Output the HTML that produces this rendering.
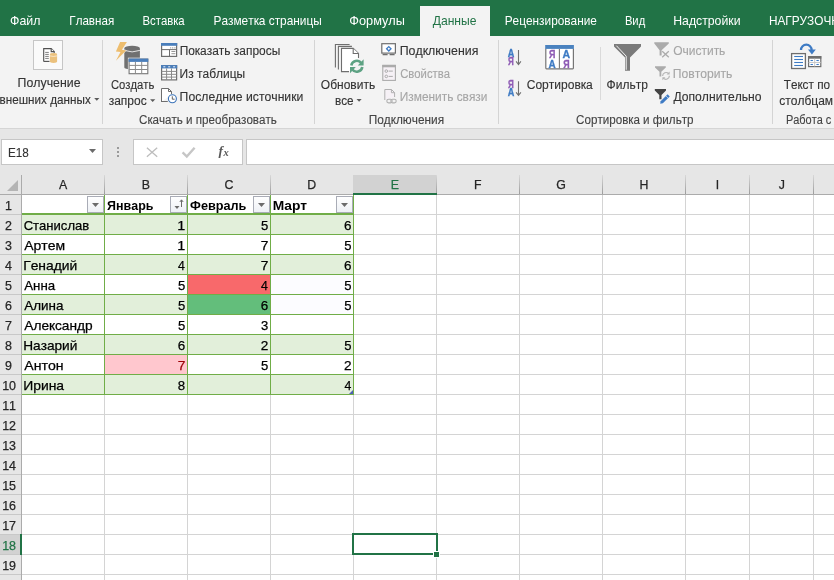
<!DOCTYPE html>
<html><head><meta charset="utf-8"><style>
html,body{margin:0;padding:0;overflow:hidden;background:#fff}
svg{display:block;will-change:transform}
text{font-family:"Liberation Sans",sans-serif;font-kerning:none;white-space:pre}
</style></head><body>
<svg width="834" height="580" viewBox="0 0 834 580">
<rect x="0" y="0" width="834" height="36" fill="#217346"/>
<rect x="420" y="6" width="70" height="30" fill="#F3F3F3"/>
<text x="10.09" y="25.00" font-size="13" fill="#FFFFFF" textLength="30.37" lengthAdjust="spacingAndGlyphs">Файл</text>
<text x="69.35" y="25.00" font-size="13" fill="#FFFFFF" textLength="44.86" lengthAdjust="spacingAndGlyphs">Главная</text>
<text x="142.47" y="25.00" font-size="13" fill="#FFFFFF" textLength="42.13" lengthAdjust="spacingAndGlyphs">Вставка</text>
<text x="213.53" y="25.00" font-size="13" fill="#FFFFFF" textLength="108.30" lengthAdjust="spacingAndGlyphs">Разметка страницы</text>
<text x="349.27" y="25.00" font-size="13" fill="#FFFFFF" textLength="55.62" lengthAdjust="spacingAndGlyphs">Формулы</text>
<text x="504.73" y="25.00" font-size="13" fill="#FFFFFF" textLength="92.20" lengthAdjust="spacingAndGlyphs">Рецензирование</text>
<text x="624.88" y="25.00" font-size="13" fill="#FFFFFF" textLength="20.31" lengthAdjust="spacingAndGlyphs">Вид</text>
<text x="673.19" y="25.00" font-size="13" fill="#FFFFFF" textLength="67.36" lengthAdjust="spacingAndGlyphs">Надстройки</text>
<text x="432.71" y="25.00" font-size="13" fill="#217346" textLength="43.83" lengthAdjust="spacingAndGlyphs">Данные</text>
<text x="768.93" y="25.00" font-size="13" fill="#FFFFFF" textLength="188.16" lengthAdjust="spacingAndGlyphs">НАГРУЗОЧНОЕ ТЕСТИРОВАНИЕ</text>
<rect x="0" y="36" width="834" height="92" fill="#F3F3F3"/>
<rect x="0" y="128" width="834" height="1" fill="#D5D5D5"/>
<rect x="102" y="40" width="1" height="84" fill="#D4D4D4"/>
<rect x="314" y="40" width="1" height="84" fill="#D4D4D4"/>
<rect x="498" y="40" width="1" height="84" fill="#D4D4D4"/>
<rect x="772" y="40" width="1" height="84" fill="#D4D4D4"/>
<rect x="600" y="47" width="1" height="53" fill="#DADADA"/>
<text x="17.60" y="87.00" font-size="12.5" fill="#333333" textLength="62.95" lengthAdjust="spacingAndGlyphs" stroke="#333333" stroke-width="0.12">Получение</text>
<text x="-0.51" y="104.20" font-size="12.5" fill="#333333" textLength="91.24" lengthAdjust="spacingAndGlyphs" stroke="#333333" stroke-width="0.12">внешних данных</text>
<text x="110.93" y="89.10" font-size="12.5" fill="#333333" textLength="43.43" lengthAdjust="spacingAndGlyphs" stroke="#333333" stroke-width="0.12">Создать</text>
<text x="108.71" y="104.80" font-size="12.5" fill="#333333" textLength="38.00" lengthAdjust="spacingAndGlyphs" stroke="#333333" stroke-width="0.12">запрос</text>
<text x="179.63" y="55.10" font-size="12.5" fill="#333333" textLength="100.60" lengthAdjust="spacingAndGlyphs" stroke="#333333" stroke-width="0.12">Показать запросы</text>
<text x="179.62" y="78.00" font-size="12.5" fill="#333333" textLength="65.61" lengthAdjust="spacingAndGlyphs" stroke="#333333" stroke-width="0.12">Из таблицы</text>
<text x="179.61" y="101.00" font-size="12.5" fill="#333333" textLength="123.73" lengthAdjust="spacingAndGlyphs" stroke="#333333" stroke-width="0.12">Последние источники</text>
<text x="139.01" y="124.20" font-size="12.5" fill="#444444" textLength="137.87" lengthAdjust="spacingAndGlyphs" stroke="#444444" stroke-width="0.12">Скачать и преобразовать</text>
<text x="320.83" y="89.10" font-size="12.5" fill="#333333" textLength="54.36" lengthAdjust="spacingAndGlyphs" stroke="#333333" stroke-width="0.12">Обновить</text>
<text x="334.99" y="104.80" font-size="12.5" fill="#333333" textLength="18.64" lengthAdjust="spacingAndGlyphs" stroke="#333333" stroke-width="0.12">все</text>
<text x="399.70" y="55.10" font-size="12.5" fill="#333333" textLength="78.66" lengthAdjust="spacingAndGlyphs" stroke="#333333" stroke-width="0.12">Подключения</text>
<text x="400.13" y="78.00" font-size="12.5" fill="#A6A6A6" textLength="49.87" lengthAdjust="spacingAndGlyphs" stroke="#A6A6A6" stroke-width="0.12">Свойства</text>
<text x="399.72" y="101.00" font-size="12.5" fill="#A6A6A6" textLength="87.70" lengthAdjust="spacingAndGlyphs" stroke="#A6A6A6" stroke-width="0.12">Изменить связи</text>
<text x="368.74" y="124.20" font-size="12.5" fill="#444444" textLength="75.38" lengthAdjust="spacingAndGlyphs" stroke="#444444" stroke-width="0.12">Подключения</text>
<text x="526.69" y="89.20" font-size="12.5" fill="#333333" textLength="66.11" lengthAdjust="spacingAndGlyphs" stroke="#333333" stroke-width="0.12">Сортировка</text>
<text x="606.61" y="89.20" font-size="12.5" fill="#333333" textLength="41.30" lengthAdjust="spacingAndGlyphs" stroke="#333333" stroke-width="0.12">Фильтр</text>
<text x="673.13" y="55.10" font-size="12.5" fill="#A6A6A6" textLength="52.26" lengthAdjust="spacingAndGlyphs" stroke="#A6A6A6" stroke-width="0.12">Очистить</text>
<text x="672.72" y="78.00" font-size="12.5" fill="#A6A6A6" textLength="59.68" lengthAdjust="spacingAndGlyphs" stroke="#A6A6A6" stroke-width="0.12">Повторить</text>
<text x="673.61" y="101.00" font-size="12.5" fill="#333333" textLength="87.90" lengthAdjust="spacingAndGlyphs" stroke="#333333" stroke-width="0.12">Дополнительно</text>
<text x="576.11" y="124.20" font-size="12.5" fill="#444444" textLength="117.38" lengthAdjust="spacingAndGlyphs" stroke="#444444" stroke-width="0.12">Сортировка и фильтр</text>
<text x="783.74" y="88.90" font-size="12.5" fill="#333333" textLength="46.36" lengthAdjust="spacingAndGlyphs" stroke="#333333" stroke-width="0.12">Текст по</text>
<text x="779.29" y="104.80" font-size="12.5" fill="#333333" textLength="53.84" lengthAdjust="spacingAndGlyphs" stroke="#333333" stroke-width="0.12">столбцам</text>
<text x="785.90" y="123.60" font-size="12.5" fill="#444444" textLength="94.53" lengthAdjust="spacingAndGlyphs" stroke="#444444" stroke-width="0.12">Работа с данными</text>
<rect x="33.5" y="40.5" width="29" height="29" fill="#FAFAFA" stroke="#C6C6C6" stroke-width="1"/>
<path d="M43.7 61.5V48.6H51.2L54.2 51.6V53" fill="#fff" stroke="#505050" stroke-width="1.1"/>
<path d="M43.7 61.4H49.5" stroke="#505050" stroke-width="1.1"/>
<path d="M51.2 48.6V51.6H54.2" fill="#fff" stroke="#505050" stroke-width="1.1"/>
<rect x="45.2" y="51.9" width="3.6" height="1" fill="#808080"/>
<rect x="45.2" y="53.9" width="3.6" height="1" fill="#808080"/>
<rect x="45.2" y="55.9" width="3.6" height="1" fill="#808080"/>
<rect x="45.2" y="57.9" width="3.6" height="1" fill="#808080"/>
<path d="M49.9 54.2V61.6Q49.9 63 53.5 63Q57.1 63 57.1 61.6V54.2Z" fill="#EBC17D"/>
<ellipse cx="53.5" cy="54.2" rx="3.6" ry="1.3" fill="#EBC17D"/>
<path d="M50 55.9Q53.5 57.0 57 55.9" stroke="#FFF7E8" stroke-width="0.7" fill="none"/>
<path d="M124.3 48.4V67.4Q124.3 69.2 132.1 69.2Q139.9 69.2 139.9 67.4V48.4Z" fill="#707070"/>
<ellipse cx="132.1" cy="48.3" rx="7.8" ry="2.6" fill="#707070"/>
<path d="M124.3 50.4Q132.1 53.4 139.9 50.4" stroke="#F3F3F3" stroke-width="0.9" fill="none"/>
<path d="M120.1 42.1L126.9 42.1L121.9 49.7L126.1 50.4L115.9 60.7L120.5 52.0L115.9 51.4Z" fill="#EDBD6E" stroke="#F3F3F3" stroke-width="1" paint-order="stroke"/>
<rect x="127.9" y="57.7" width="21.1" height="17.2" fill="#F3F3F3"/>
<rect x="129.1" y="59.1" width="18.7" height="14.6" fill="#FFFFFF" stroke="#767676" stroke-width="1.1"/>
<rect x="128.6" y="58.6" width="19.7" height="3.3" fill="#4A7EBB"/>
<path d="M135.4 61.8V73.3M141.7 61.8V73.3M129.1 65.4H147.8M129.1 69.5H147.8" stroke="#8A8A8A" stroke-width="1"/>
<rect x="161.6" y="43.6" width="15" height="12.8" fill="#fff" stroke="#6E6E6E" stroke-width="1.2"/>
<rect x="161" y="43" width="16.2" height="2.8" fill="#4A7EBB"/>
<rect x="170.1" y="47.4" width="1" height="1" fill="#8A8A8A"/>
<rect x="171.9" y="47.4" width="1" height="1" fill="#8A8A8A"/>
<rect x="173.7" y="47.4" width="1" height="1" fill="#8A8A8A"/>
<rect x="175.5" y="47.4" width="1" height="1" fill="#8A8A8A"/>
<path d="M161.6 49.6H176.6M169.5 49.6V56.4" stroke="#6E6E6E" stroke-width="1"/>
<path d="M171.4 51.5H175.4M171.4 53.7H175.4" stroke="#8A8A8A" stroke-width="0.9"/>
<rect x="161.6" y="65.7" width="15" height="14.2" fill="#fff" stroke="#6E6E6E" stroke-width="1.2"/>
<rect x="161" y="65.1" width="16.2" height="3.3" fill="#4A7EBB"/>
<path d="M163.3 66.8H165.3M168.2 66.8H170.2M173.1 66.8H175.1" stroke="#fff" stroke-width="0.9"/>
<path d="M166.6 68.4V79.9M171.5 68.4V79.9M161.6 71.4H176.6M161.6 74.3H176.6M161.6 77.1H176.6" stroke="#8A8A8A" stroke-width="1"/>
<path d="M161.5 102V88.5H168.5L171.5 91.5V94" fill="#fff" stroke="#6E6E6E" stroke-width="1" stroke-linejoin="miter"/>
<path d="M161.5 101.5H167.8" stroke="#6E6E6E" stroke-width="1"/>
<path d="M168.5 88.5V91.5H171.5" fill="none" stroke="#6E6E6E" stroke-width="1"/>
<circle cx="172.4" cy="98.8" r="4.0" fill="#fff" stroke="#3A72B8" stroke-width="1.1"/>
<path d="M172.3 96.3V99.2H174.6" fill="none" stroke="#505050" stroke-width="0.9"/>
<path d="M94.2 97.9h5.2l-2.6 2.8z" fill="#5A5A5A"/>
<path d="M150.1 99.2h5.2l-2.6 2.8z" fill="#5A5A5A"/>
<path d="M356.5 99.0h5.2l-2.6 2.8z" fill="#5A5A5A"/>
<path d="M335.4 67.5V44.5H349.6" fill="none" stroke="#6E6E6E" stroke-width="1.1"/>
<path d="M338.4 69.5V46.4H351.9" fill="none" stroke="#6E6E6E" stroke-width="1.1"/>
<path d="M349 71.6H341.5V48.4H353.2L358.5 53.6V58" fill="#fff" stroke="#6E6E6E" stroke-width="1.1"/>
<path d="M353.2 48.4V53.5H358.5" fill="#fff" stroke="#6E6E6E" stroke-width="1.1"/>
<path d="M351.3 65.5A5.6 5.6 0 0 1 361.3 63.0" fill="none" stroke="#5DA283" stroke-width="2.6"/>
<path d="M363.6 59.2V65.4H357.8Z" fill="#5DA283"/>
<path d="M362.3 67.0A5.6 5.6 0 0 1 352.3 69.5" fill="none" stroke="#5DA283" stroke-width="2.6"/>
<path d="M350.0 73.2V67.0H355.8Z" fill="#5DA283"/>
<rect x="381.8" y="43.7" width="13.6" height="9.4" fill="#fff" stroke="#6E6E6E" stroke-width="1.2"/>
<path d="M382.6 54.6H387.6M389.6 54.6H394.6" stroke="#6E6E6E" stroke-width="1.4"/>
<path d="M388.8 46.6L391 48.8L388.8 51L386.6 48.8Z" fill="none" stroke="#3E7BC4" stroke-width="1.3"/>
<rect x="382.8" y="65.4" width="12.6" height="15" fill="#F6F1F6" stroke="#ABABAB" stroke-width="1.1"/>
<rect x="382.3" y="64.9" width="13.6" height="2.4" fill="#ABABAB"/>
<circle cx="386.3" cy="71.1" r="1.3" fill="none" stroke="#ABABAB" stroke-width="1"/>
<circle cx="386.3" cy="76.4" r="1.3" fill="none" stroke="#ABABAB" stroke-width="1"/>
<path d="M388.6 71.1H392.8M388.6 76.4H392.8" stroke="#ABABAB" stroke-width="1"/>
<path d="M384.8 100V89.5H391.5L394.6 92.6V97" fill="#F6F1F6" stroke="#B0B0B0" stroke-width="1"/>
<path d="M391.4 89.5V92.7H394.6" fill="none" stroke="#B0B0B0" stroke-width="1"/>
<rect x="386.8" y="99.3" width="5.4" height="3.6" rx="1.8" fill="none" stroke="#B0B0B0" stroke-width="1.1"/>
<rect x="390.8" y="99.3" width="5.4" height="3.6" rx="1.8" fill="none" stroke="#B0B0B0" stroke-width="1.1"/>
<text x="507.70" y="57.1" font-size="10" font-weight="bold" fill="#3E7BC4" stroke="#3E7BC4" stroke-width="0.3" textLength="6.60" lengthAdjust="spacingAndGlyphs">A</text>
<text x="508.00" y="64.9" font-size="10" font-weight="bold" fill="#8E5BB5" stroke="#8E5BB5" stroke-width="0.3" textLength="5.80" lengthAdjust="spacingAndGlyphs">Я</text>
<text x="508.00" y="87.5" font-size="10" font-weight="bold" fill="#8E5BB5" stroke="#8E5BB5" stroke-width="0.3" textLength="5.80" lengthAdjust="spacingAndGlyphs">Я</text>
<text x="507.70" y="95.7" font-size="10" font-weight="bold" fill="#3E7BC4" stroke="#3E7BC4" stroke-width="0.3" textLength="6.60" lengthAdjust="spacingAndGlyphs">A</text>
<path d="M518.5 50V64.2M516.1 61.4L518.5 64.5L520.9 61.4" fill="none" stroke="#707070" stroke-width="1.1"/>
<path d="M518.5 81.2V95.10000000000001M516.1 92.30000000000001L518.5 95.4L520.9 92.30000000000001" fill="none" stroke="#707070" stroke-width="1.1"/>
<path d="M545.8 48.5V68.1Q545.8 68.8 546.5 68.8H572.7Q573.4 68.8 573.4 68.1V48.5" fill="#fff" stroke="#767676" stroke-width="1.2"/>
<rect x="545.2" y="45" width="28.7" height="3.9" fill="#4A82BF"/>
<path d="M559.4 48.9V68.5" stroke="#767676" stroke-width="1.1"/>
<text x="549.00" y="57.7" font-size="10.6" font-weight="bold" fill="#8E5BB5" stroke="#8E5BB5" stroke-width="0.3" textLength="6.40" lengthAdjust="spacingAndGlyphs">Я</text>
<text x="548.60" y="67.7" font-size="10.6" font-weight="bold" fill="#3E7BC4" stroke="#3E7BC4" stroke-width="0.3" textLength="7.20" lengthAdjust="spacingAndGlyphs">A</text>
<text x="562.60" y="57.7" font-size="10.6" font-weight="bold" fill="#3E7BC4" stroke="#3E7BC4" stroke-width="0.3" textLength="7.60" lengthAdjust="spacingAndGlyphs">A</text>
<text x="563.20" y="67.7" font-size="10.6" font-weight="bold" fill="#8E5BB5" stroke="#8E5BB5" stroke-width="0.3" textLength="6.40" lengthAdjust="spacingAndGlyphs">Я</text>
<path d="M614 44H641V46.5L630 57.5V70.8H625V57.5L614 46.5Z" fill="#7A7A7A"/>
<path d="M616.4 45.7L626.2 56.2V69.8" fill="none" stroke="#FFFFFF" stroke-width="0.9"/>
<path d="M654.3 42.2H668.8V43.6L661.6 50.2V55.5H659.6V50.2L654.3 43.6Z" fill="#ABABAB"/>
<path d="M662.2 51.2L668.8 57.3M668.8 51.2L662.2 57.3" stroke="#ABABAB" stroke-width="1.3"/>
<path d="M655 66.2H665.8V67.4L661.3 71.8V76.5H659.5V71.8L655 67.4Z" fill="#ABABAB"/>
<path d="M662.6 76A3.5 3.5 0 0 1 668.6 73.6M669.4 75.8A3.5 3.5 0 0 1 663.4 78.2" fill="none" stroke="#B4B4B4" stroke-width="1.2"/>
<path d="M669.6 71.6V74.6H666.6Z" fill="#B4B4B4"/><path d="M662.4 80.2V77.2H665.4Z" fill="#B4B4B4"/>
<path d="M654.8 89H666V90.6L661.5 95V99.3H659.3V95L654.8 90.6Z" fill="#444444"/>
<path d="M660.2 103.8L662.85 103.34L669.78 96.41L667.58 94.21L660.65 101.14Z" fill="#3E7BC4"/>
<path d="M665.9 95.9L668.1 98.1" stroke="#F3F3F3" stroke-width="0.6"/>
<rect x="791.6" y="53.6" width="13.8" height="14.9" fill="#fff" stroke="#6E6E6E" stroke-width="1.3"/>
<path d="M794.2 56.5H803" stroke="#3E7BC4" stroke-width="1.1"/>
<path d="M794.2 59.5H803" stroke="#3E7BC4" stroke-width="1.1"/>
<path d="M794.2 62.5H803" stroke="#3E7BC4" stroke-width="1.1"/>
<path d="M794.2 65.5H803" stroke="#3E7BC4" stroke-width="1.1"/>
<rect x="808.6" y="56.6" width="12.2" height="10.0" fill="#fff" stroke="#6E6E6E" stroke-width="1.2"/>
<rect x="808.1" y="56.1" width="13.2" height="2.6" fill="#6E6E6E"/>
<path d="M814.7 58.6V66.5M808.6 62.5H820.8" stroke="#C4C4C4" stroke-width="0.9"/>
<path d="M810.5 60.5H812.9" stroke="#3E7BC4" stroke-width="1.1"/>
<path d="M816.4 60.5H818.8" stroke="#3E7BC4" stroke-width="1.1"/>
<path d="M810.5 64.5H812.9" stroke="#3E7BC4" stroke-width="1.1"/>
<path d="M816.4 64.5H818.8" stroke="#3E7BC4" stroke-width="1.1"/>
<path d="M801.0 50.0A5.3 5.3 0 0 1 811.6 50.0" fill="none" stroke="#3E7BC4" stroke-width="2.3"/>
<path d="M808.0 49.4H815.8L811.9 54.4Z" fill="#3E7BC4"/>
<rect x="0" y="129" width="834" height="46" fill="#E6E6E6"/>
<rect x="1.5" y="139.5" width="101" height="25" fill="#FFFFFF" stroke="#C6C6C6" stroke-width="1"/>
<text x="8.04" y="157.00" font-size="12.5" fill="#333333" textLength="20.87" lengthAdjust="spacingAndGlyphs" stroke="#333333" stroke-width="0.12">E18</text>
<path d="M89 149h7l-3.5 4z" fill="#6B6B6B"/>
<rect x="117" y="147" width="2" height="2" fill="#9A9A9A"/>
<rect x="117" y="151" width="2" height="2" fill="#9A9A9A"/>
<rect x="117" y="155" width="2" height="2" fill="#9A9A9A"/>
<rect x="133.5" y="139.5" width="109" height="25" fill="#FFFFFF" stroke="#C6C6C6" stroke-width="1"/>
<rect x="246.5" y="139.5" width="600" height="25" fill="#FFFFFF" stroke="#C6C6C6" stroke-width="1"/>
<path d="M146.9 147.8L157.2 156.8M157.2 147.8L146.9 156.8" stroke="#BDBDBD" stroke-width="1.3"/>
<path d="M182.6 152.4L186.8 156.6L194.6 147.8" fill="none" stroke="#C6C6C6" stroke-width="2.4"/>
<text x="218.6" y="155.4" style="font-family:'Liberation Serif',serif;font-style:italic;font-weight:bold" font-size="13.5" fill="#595959">f</text>
<text x="223.4" y="156.0" style="font-family:'Liberation Serif',serif;font-style:italic;font-weight:bold" font-size="10.5" fill="#595959">x</text>
<rect x="0" y="175" width="834" height="20" fill="#E6E6E6"/>
<rect x="0" y="195" width="21" height="385" fill="#E6E6E6"/>
<rect x="22" y="195" width="812" height="385" fill="#FFFFFF"/>
<rect x="22" y="214" width="812" height="1" fill="#D4D4D4"/>
<rect x="0" y="214" width="21" height="1" fill="#C8C8C8"/>
<rect x="22" y="234" width="812" height="1" fill="#D4D4D4"/>
<rect x="0" y="234" width="21" height="1" fill="#C8C8C8"/>
<rect x="22" y="254" width="812" height="1" fill="#D4D4D4"/>
<rect x="0" y="254" width="21" height="1" fill="#C8C8C8"/>
<rect x="22" y="274" width="812" height="1" fill="#D4D4D4"/>
<rect x="0" y="274" width="21" height="1" fill="#C8C8C8"/>
<rect x="22" y="294" width="812" height="1" fill="#D4D4D4"/>
<rect x="0" y="294" width="21" height="1" fill="#C8C8C8"/>
<rect x="22" y="314" width="812" height="1" fill="#D4D4D4"/>
<rect x="0" y="314" width="21" height="1" fill="#C8C8C8"/>
<rect x="22" y="334" width="812" height="1" fill="#D4D4D4"/>
<rect x="0" y="334" width="21" height="1" fill="#C8C8C8"/>
<rect x="22" y="354" width="812" height="1" fill="#D4D4D4"/>
<rect x="0" y="354" width="21" height="1" fill="#C8C8C8"/>
<rect x="22" y="374" width="812" height="1" fill="#D4D4D4"/>
<rect x="0" y="374" width="21" height="1" fill="#C8C8C8"/>
<rect x="22" y="394" width="812" height="1" fill="#D4D4D4"/>
<rect x="0" y="394" width="21" height="1" fill="#C8C8C8"/>
<rect x="22" y="414" width="812" height="1" fill="#D4D4D4"/>
<rect x="0" y="414" width="21" height="1" fill="#C8C8C8"/>
<rect x="22" y="434" width="812" height="1" fill="#D4D4D4"/>
<rect x="0" y="434" width="21" height="1" fill="#C8C8C8"/>
<rect x="22" y="454" width="812" height="1" fill="#D4D4D4"/>
<rect x="0" y="454" width="21" height="1" fill="#C8C8C8"/>
<rect x="22" y="474" width="812" height="1" fill="#D4D4D4"/>
<rect x="0" y="474" width="21" height="1" fill="#C8C8C8"/>
<rect x="22" y="494" width="812" height="1" fill="#D4D4D4"/>
<rect x="0" y="494" width="21" height="1" fill="#C8C8C8"/>
<rect x="22" y="514" width="812" height="1" fill="#D4D4D4"/>
<rect x="0" y="514" width="21" height="1" fill="#C8C8C8"/>
<rect x="22" y="534" width="812" height="1" fill="#D4D4D4"/>
<rect x="0" y="534" width="21" height="1" fill="#C8C8C8"/>
<rect x="22" y="554" width="812" height="1" fill="#D4D4D4"/>
<rect x="0" y="554" width="21" height="1" fill="#C8C8C8"/>
<rect x="22" y="574" width="812" height="1" fill="#D4D4D4"/>
<rect x="0" y="574" width="21" height="1" fill="#C8C8C8"/>
<rect x="104" y="195" width="1" height="385" fill="#D4D4D4"/>
<rect x="187" y="195" width="1" height="385" fill="#D4D4D4"/>
<rect x="270" y="195" width="1" height="385" fill="#D4D4D4"/>
<rect x="353" y="195" width="1" height="385" fill="#D4D4D4"/>
<rect x="436" y="195" width="1" height="385" fill="#D4D4D4"/>
<rect x="519" y="195" width="1" height="385" fill="#D4D4D4"/>
<rect x="602" y="195" width="1" height="385" fill="#D4D4D4"/>
<rect x="685" y="195" width="1" height="385" fill="#D4D4D4"/>
<rect x="749" y="195" width="1" height="385" fill="#D4D4D4"/>
<rect x="813" y="195" width="1" height="385" fill="#D4D4D4"/>
<rect x="0" y="194" width="834" height="1" fill="#ABABAB"/>
<rect x="21" y="175" width="1" height="405" fill="#ABABAB"/>
<defs><linearGradient id="sep" x1="0" y1="0" x2="0" y2="1"><stop offset="0" stop-color="#D8D8D8"/><stop offset="1" stop-color="#9C9C9C"/></linearGradient><linearGradient id="btn" x1="0" y1="0" x2="0" y2="1"><stop offset="0" stop-color="#FFFFFF"/><stop offset="1" stop-color="#EDF0F5"/></linearGradient></defs>
<rect x="104" y="175" width="1" height="19" fill="url(#sep)"/>
<rect x="187" y="175" width="1" height="19" fill="url(#sep)"/>
<rect x="270" y="175" width="1" height="19" fill="url(#sep)"/>
<rect x="353" y="175" width="1" height="19" fill="url(#sep)"/>
<rect x="436" y="175" width="1" height="19" fill="url(#sep)"/>
<rect x="519" y="175" width="1" height="19" fill="url(#sep)"/>
<rect x="602" y="175" width="1" height="19" fill="url(#sep)"/>
<rect x="685" y="175" width="1" height="19" fill="url(#sep)"/>
<rect x="749" y="175" width="1" height="19" fill="url(#sep)"/>
<rect x="813" y="175" width="1" height="19" fill="url(#sep)"/>
<path d="M18 180v11h-11z" fill="#B4B4B4"/>
<rect x="353" y="175" width="83" height="19" fill="#D2D2D2"/>
<rect x="353" y="193" width="84" height="2" fill="#217346"/>
<rect x="0" y="535" width="21" height="19" fill="#D2D2D2"/>
<rect x="20" y="534" width="2" height="21" fill="#217346"/>
<text x="58.88" y="189.00" font-size="13" fill="#262626" textLength="8.24" lengthAdjust="spacingAndGlyphs" stroke="#262626" stroke-width="0.25">A</text>
<text x="141.70" y="189.00" font-size="13" fill="#262626" textLength="8.24" lengthAdjust="spacingAndGlyphs" stroke="#262626" stroke-width="0.25">B</text>
<text x="224.46" y="189.00" font-size="13" fill="#262626" textLength="8.92" lengthAdjust="spacingAndGlyphs" stroke="#262626" stroke-width="0.25">C</text>
<text x="307.33" y="189.00" font-size="13" fill="#262626" textLength="8.92" lengthAdjust="spacingAndGlyphs" stroke="#262626" stroke-width="0.25">D</text>
<text x="390.64" y="189.00" font-size="13" fill="#217346" textLength="8.24" lengthAdjust="spacingAndGlyphs" stroke="#217346" stroke-width="0.25">E</text>
<text x="473.97" y="189.00" font-size="13" fill="#262626" textLength="7.54" lengthAdjust="spacingAndGlyphs" stroke="#262626" stroke-width="0.25">F</text>
<text x="556.35" y="189.00" font-size="13" fill="#262626" textLength="9.61" lengthAdjust="spacingAndGlyphs" stroke="#262626" stroke-width="0.25">G</text>
<text x="639.54" y="189.00" font-size="13" fill="#262626" textLength="8.92" lengthAdjust="spacingAndGlyphs" stroke="#262626" stroke-width="0.25">H</text>
<text x="715.78" y="189.00" font-size="13" fill="#262626" textLength="3.43" lengthAdjust="spacingAndGlyphs" stroke="#262626" stroke-width="0.25">I</text>
<text x="778.77" y="189.00" font-size="13" fill="#262626" textLength="6.17" lengthAdjust="spacingAndGlyphs" stroke="#262626" stroke-width="0.25">J</text>
<text x="5.03" y="210" font-size="13" fill="#262626" stroke="#262626" stroke-width="0.25" textLength="6.94" lengthAdjust="spacingAndGlyphs">1</text>
<text x="5.03" y="230" font-size="13" fill="#262626" stroke="#262626" stroke-width="0.25" textLength="6.94" lengthAdjust="spacingAndGlyphs">2</text>
<text x="5.03" y="250" font-size="13" fill="#262626" stroke="#262626" stroke-width="0.25" textLength="6.94" lengthAdjust="spacingAndGlyphs">3</text>
<text x="5.03" y="270" font-size="13" fill="#262626" stroke="#262626" stroke-width="0.25" textLength="6.94" lengthAdjust="spacingAndGlyphs">4</text>
<text x="5.03" y="290" font-size="13" fill="#262626" stroke="#262626" stroke-width="0.25" textLength="6.94" lengthAdjust="spacingAndGlyphs">5</text>
<text x="5.03" y="310" font-size="13" fill="#262626" stroke="#262626" stroke-width="0.25" textLength="6.94" lengthAdjust="spacingAndGlyphs">6</text>
<text x="5.03" y="330" font-size="13" fill="#262626" stroke="#262626" stroke-width="0.25" textLength="6.94" lengthAdjust="spacingAndGlyphs">7</text>
<text x="5.03" y="350" font-size="13" fill="#262626" stroke="#262626" stroke-width="0.25" textLength="6.94" lengthAdjust="spacingAndGlyphs">8</text>
<text x="5.03" y="370" font-size="13" fill="#262626" stroke="#262626" stroke-width="0.25" textLength="6.94" lengthAdjust="spacingAndGlyphs">9</text>
<text x="2.15" y="390" font-size="13" fill="#262626" stroke="#262626" stroke-width="0.25" textLength="13.88" lengthAdjust="spacingAndGlyphs">10</text>
<text x="2.15" y="410" font-size="13" fill="#262626" stroke="#262626" stroke-width="0.25" textLength="13.88" lengthAdjust="spacingAndGlyphs">11</text>
<text x="2.15" y="430" font-size="13" fill="#262626" stroke="#262626" stroke-width="0.25" textLength="13.88" lengthAdjust="spacingAndGlyphs">12</text>
<text x="2.15" y="450" font-size="13" fill="#262626" stroke="#262626" stroke-width="0.25" textLength="13.88" lengthAdjust="spacingAndGlyphs">13</text>
<text x="2.15" y="470" font-size="13" fill="#262626" stroke="#262626" stroke-width="0.25" textLength="13.88" lengthAdjust="spacingAndGlyphs">14</text>
<text x="2.15" y="490" font-size="13" fill="#262626" stroke="#262626" stroke-width="0.25" textLength="13.88" lengthAdjust="spacingAndGlyphs">15</text>
<text x="2.15" y="510" font-size="13" fill="#262626" stroke="#262626" stroke-width="0.25" textLength="13.88" lengthAdjust="spacingAndGlyphs">16</text>
<text x="2.15" y="530" font-size="13" fill="#262626" stroke="#262626" stroke-width="0.25" textLength="13.88" lengthAdjust="spacingAndGlyphs">17</text>
<text x="2.15" y="550" font-size="13" fill="#217346" stroke="#217346" stroke-width="0.25" textLength="13.88" lengthAdjust="spacingAndGlyphs">18</text>
<text x="2.15" y="570" font-size="13" fill="#262626" stroke="#262626" stroke-width="0.25" textLength="13.88" lengthAdjust="spacingAndGlyphs">19</text>
<rect x="22" y="215" width="331" height="19" fill="#E2EFDA"/>
<rect x="22" y="255" width="331" height="19" fill="#E2EFDA"/>
<rect x="22" y="295" width="331" height="19" fill="#E2EFDA"/>
<rect x="22" y="335" width="331" height="19" fill="#E2EFDA"/>
<rect x="22" y="375" width="331" height="19" fill="#E2EFDA"/>
<rect x="188" y="275" width="82" height="19" fill="#F8696B"/>
<rect x="188" y="295" width="82" height="19" fill="#63BE7B"/>
<rect x="105" y="355" width="82" height="19" fill="#FFC7CE"/>
<rect x="271" y="275" width="82" height="39" fill="#FCFCFF"/>
<text x="107.09" y="210.00" font-size="13.6" fill="#000000" font-weight="bold" textLength="46.33" lengthAdjust="spacingAndGlyphs">Январь</text>
<text x="190.06" y="210.00" font-size="13.6" fill="#000000" font-weight="bold" textLength="56.37" lengthAdjust="spacingAndGlyphs">Февраль</text>
<text x="272.78" y="210.00" font-size="13.6" fill="#000000" font-weight="bold" textLength="34.31" lengthAdjust="spacingAndGlyphs">Март</text>
<rect x="87.5" y="196.5" width="16" height="16" fill="url(#btn)" stroke="#A9ACB6" stroke-width="1"/>
<rect x="170.5" y="196.5" width="16" height="16" fill="url(#btn)" stroke="#A9ACB6" stroke-width="1"/>
<rect x="253.5" y="196.5" width="16" height="16" fill="url(#btn)" stroke="#A9ACB6" stroke-width="1"/>
<rect x="336.5" y="196.5" width="16" height="16" fill="url(#btn)" stroke="#A9ACB6" stroke-width="1"/>
<path d="M92 203h7l-3.5 4z" fill="#6B6B6B"/>
<path d="M258 203h7l-3.5 4z" fill="#6B6B6B"/>
<path d="M341 203h7l-3.5 4z" fill="#6B6B6B"/>
<rect x="22" y="234" width="332" height="1" fill="#70AD47"/>
<rect x="22" y="254" width="332" height="1" fill="#70AD47"/>
<rect x="22" y="274" width="332" height="1" fill="#70AD47"/>
<rect x="22" y="294" width="332" height="1" fill="#70AD47"/>
<rect x="22" y="314" width="332" height="1" fill="#70AD47"/>
<rect x="22" y="334" width="332" height="1" fill="#70AD47"/>
<rect x="22" y="354" width="332" height="1" fill="#70AD47"/>
<rect x="22" y="374" width="332" height="1" fill="#70AD47"/>
<rect x="22" y="394" width="332" height="1" fill="#70AD47"/>
<rect x="22" y="213" width="332" height="2" fill="#70AD47"/>
<rect x="104" y="195" width="1" height="200" fill="#70AD47"/>
<rect x="187" y="195" width="1" height="200" fill="#70AD47"/>
<rect x="270" y="195" width="1" height="200" fill="#70AD47"/>
<rect x="353" y="195" width="1" height="200" fill="#70AD47"/>
<path d="M174.5 206h5l-2.5 3z" fill="#6B6B6B"/>
<path d="M181.5 200v7" stroke="#6B6B6B" stroke-width="1"/><path d="M179.8 202l1.7-2.2 1.7 2.2" stroke="#6B6B6B" fill="none" stroke-width="1"/>
<text x="23.64" y="229.80" font-size="13.6" fill="#000000" textLength="65.63" lengthAdjust="spacingAndGlyphs" stroke="#000000" stroke-width="0.25">Станислав</text>
<text x="177.30" y="229.80" font-size="13.6" fill="#000000" textLength="8.00" lengthAdjust="spacingAndGlyphs" stroke="#000000" stroke-width="0.25">1</text>
<text x="260.88" y="229.80" font-size="13.6" fill="#000000" textLength="7.27" lengthAdjust="spacingAndGlyphs" stroke="#000000" stroke-width="0.25">5</text>
<text x="344.12" y="229.80" font-size="13.6" fill="#000000" textLength="7.47" lengthAdjust="spacingAndGlyphs" stroke="#000000" stroke-width="0.25">6</text>
<text x="24.27" y="249.80" font-size="13.6" fill="#000000" textLength="40.89" lengthAdjust="spacingAndGlyphs" stroke="#000000" stroke-width="0.25">Артем</text>
<text x="177.30" y="249.80" font-size="13.6" fill="#000000" textLength="8.00" lengthAdjust="spacingAndGlyphs" stroke="#000000" stroke-width="0.25">1</text>
<text x="260.70" y="249.80" font-size="13.6" fill="#000000" textLength="7.59" lengthAdjust="spacingAndGlyphs" stroke="#000000" stroke-width="0.25">7</text>
<text x="344.28" y="249.80" font-size="13.6" fill="#000000" textLength="7.27" lengthAdjust="spacingAndGlyphs" stroke="#000000" stroke-width="0.25">5</text>
<text x="23.16" y="269.80" font-size="13.6" fill="#000000" textLength="54.10" lengthAdjust="spacingAndGlyphs" stroke="#000000" stroke-width="0.25">Генадий</text>
<text x="178.12" y="269.80" font-size="13.6" fill="#000000" textLength="6.84" lengthAdjust="spacingAndGlyphs" stroke="#000000" stroke-width="0.25">4</text>
<text x="260.70" y="269.80" font-size="13.6" fill="#000000" textLength="7.59" lengthAdjust="spacingAndGlyphs" stroke="#000000" stroke-width="0.25">7</text>
<text x="344.12" y="269.80" font-size="13.6" fill="#000000" textLength="7.47" lengthAdjust="spacingAndGlyphs" stroke="#000000" stroke-width="0.25">6</text>
<text x="24.27" y="289.80" font-size="13.6" fill="#000000" textLength="30.93" lengthAdjust="spacingAndGlyphs" stroke="#000000" stroke-width="0.25">Анна</text>
<text x="177.88" y="289.80" font-size="13.6" fill="#000000" textLength="7.27" lengthAdjust="spacingAndGlyphs" stroke="#000000" stroke-width="0.25">5</text>
<text x="261.12" y="289.80" font-size="13.6" fill="#000000" textLength="6.84" lengthAdjust="spacingAndGlyphs" stroke="#000000" stroke-width="0.25">4</text>
<text x="344.28" y="289.80" font-size="13.6" fill="#000000" textLength="7.27" lengthAdjust="spacingAndGlyphs" stroke="#000000" stroke-width="0.25">5</text>
<text x="24.27" y="309.80" font-size="13.6" fill="#000000" textLength="39.23" lengthAdjust="spacingAndGlyphs" stroke="#000000" stroke-width="0.25">Алина</text>
<text x="177.88" y="309.80" font-size="13.6" fill="#000000" textLength="7.27" lengthAdjust="spacingAndGlyphs" stroke="#000000" stroke-width="0.25">5</text>
<text x="260.72" y="309.80" font-size="13.6" fill="#000000" textLength="7.47" lengthAdjust="spacingAndGlyphs" stroke="#000000" stroke-width="0.25">6</text>
<text x="344.28" y="309.80" font-size="13.6" fill="#000000" textLength="7.27" lengthAdjust="spacingAndGlyphs" stroke="#000000" stroke-width="0.25">5</text>
<text x="24.27" y="329.80" font-size="13.6" fill="#000000" textLength="68.40" lengthAdjust="spacingAndGlyphs" stroke="#000000" stroke-width="0.25">Александр</text>
<text x="177.88" y="329.80" font-size="13.6" fill="#000000" textLength="7.27" lengthAdjust="spacingAndGlyphs" stroke="#000000" stroke-width="0.25">5</text>
<text x="260.90" y="329.80" font-size="13.6" fill="#000000" textLength="7.27" lengthAdjust="spacingAndGlyphs" stroke="#000000" stroke-width="0.25">3</text>
<text x="23.18" y="349.80" font-size="13.6" fill="#000000" textLength="54.17" lengthAdjust="spacingAndGlyphs" stroke="#000000" stroke-width="0.25">Назарий</text>
<text x="177.72" y="349.80" font-size="13.6" fill="#000000" textLength="7.47" lengthAdjust="spacingAndGlyphs" stroke="#000000" stroke-width="0.25">6</text>
<text x="260.72" y="349.80" font-size="13.6" fill="#000000" textLength="7.57" lengthAdjust="spacingAndGlyphs" stroke="#000000" stroke-width="0.25">2</text>
<text x="344.28" y="349.80" font-size="13.6" fill="#000000" textLength="7.27" lengthAdjust="spacingAndGlyphs" stroke="#000000" stroke-width="0.25">5</text>
<text x="24.27" y="369.80" font-size="13.6" fill="#000000" textLength="39.31" lengthAdjust="spacingAndGlyphs" stroke="#000000" stroke-width="0.25">Антон</text>
<text x="177.70" y="369.80" font-size="13.6" fill="#9C0006" textLength="7.59" lengthAdjust="spacingAndGlyphs" stroke="#9C0006" stroke-width="0.25">7</text>
<text x="260.88" y="369.80" font-size="13.6" fill="#000000" textLength="7.27" lengthAdjust="spacingAndGlyphs" stroke="#000000" stroke-width="0.25">5</text>
<text x="344.12" y="369.80" font-size="13.6" fill="#000000" textLength="7.57" lengthAdjust="spacingAndGlyphs" stroke="#000000" stroke-width="0.25">2</text>
<text x="23.16" y="389.80" font-size="13.6" fill="#000000" textLength="40.94" lengthAdjust="spacingAndGlyphs" stroke="#000000" stroke-width="0.25">Ирина</text>
<text x="177.83" y="389.80" font-size="13.6" fill="#000000" textLength="7.35" lengthAdjust="spacingAndGlyphs" stroke="#000000" stroke-width="0.25">8</text>
<text x="344.52" y="389.80" font-size="13.6" fill="#000000" textLength="6.84" lengthAdjust="spacingAndGlyphs" stroke="#000000" stroke-width="0.25">4</text>
<path d="M353 390v4h-4z" fill="#4F5FB5"/>
<rect x="352" y="533" width="86" height="2" fill="#217346"/>
<rect x="352" y="553" width="86" height="2" fill="#217346"/>
<rect x="352" y="533" width="2" height="22" fill="#217346"/>
<rect x="436" y="533" width="2" height="22" fill="#217346"/>
<rect x="433" y="551" width="7" height="7" fill="#FFFFFF"/>
<rect x="434" y="552" width="5" height="5" fill="#217346"/>
</svg>
</body></html>
